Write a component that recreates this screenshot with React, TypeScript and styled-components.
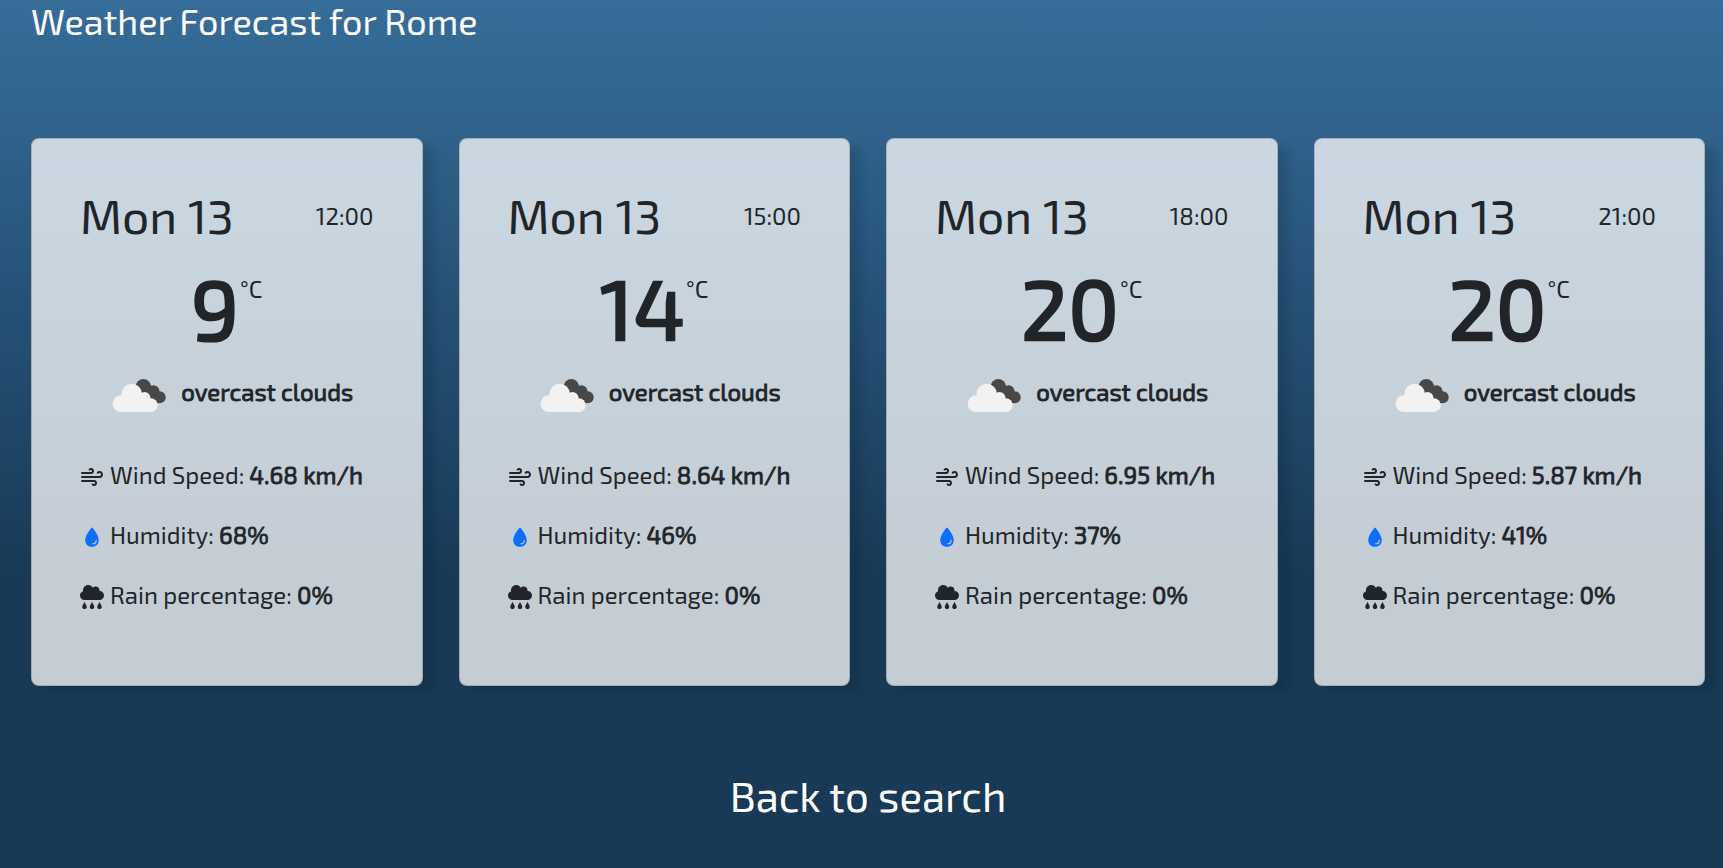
import React from "react";
import styled, { createGlobalStyle } from "styled-components";
import { FaCloudRain } from "react-icons/fa";
import { FiWind } from "react-icons/fi";
import { IoWater } from "react-icons/io5";

const GlobalStyle = createGlobalStyle`
  *, *::before, *::after { box-sizing: border-box; }
  body {
    margin: 0;
    height: 868px;
    overflow: hidden;
    color: #212529;
    font-family: "Exo 2", Roboto, "Liberation Sans", sans-serif;
    font-size: 24px;
    font-weight: 400;
    line-height: 36px;
    background: linear-gradient(180deg, #376d99 0%, #2f618a 138px, #265278 290px, #1f4668 430px, #183a56 570px, #183a56 100%);
  }
  h1, h2, p, ul { margin: 0; padding: 0; }
`;

const Page = styled.main`
  height: 868px;
  padding: 0 18px 0 31px;
  display: flex;
  flex-direction: column;
`;

const Title = styled.h1`
  color: #fff;
  font-size: 36px;
  font-weight: 400;
  line-height: 41px;
  white-space: nowrap;
`;

const Cards = styled.section`
  margin-top: 97px;
  display: grid;
  grid-template-columns: repeat(4, 1fr);
  gap: 36px;
`;

const Card = styled.article`
  height: 548px;
  padding: 45px 48px 0 48px;
  border: 1px solid rgba(0, 0, 0, 0.175);
  border-radius: 8px;
  background-color: rgba(255, 255, 255, 0.75);
  box-shadow: 12px 8px 8px -1px rgba(0, 0, 0, 0.12);
  white-space: nowrap;
`;

const CardHead = styled.header`
  height: 64px;
  display: flex;
  align-items: center;
  justify-content: space-between;
`;

const Day = styled.h2`
  margin-bottom: 2px;
  font-size: 48px;
  font-weight: 400;
  line-height: 62px;
`;

const Hour = styled.span``;

const Temperature = styled.div`
  height: 112px;
  display: flex;
  justify-content: center;
  align-items: flex-start;
`;

const Degrees = styled.strong`
  font-size: 84px;
  font-weight: 400;
  line-height: 118px;
  -webkit-text-stroke: 2.6px currentColor;
`;

const Unit = styled.span`
  margin: 23px 0 0 1px;
`;

const Condition = styled.div`
  height: 60px;
  margin-top: 2px;
  padding-left: 12px;
  display: flex;
  align-items: center;
  justify-content: center;
`;

const Strong = styled.strong`
  font-weight: 400;
  -webkit-text-stroke: 0.85px currentColor;
`;

const CloudArt = styled.svg`
  width: 54px;
  height: 36px;
  margin: 8px 15px 0 0;
`;

const Metrics = styled.ul`
  margin-top: 35px;
  list-style: none;
  display: flex;
  flex-direction: column;
  gap: 24px;
`;

const Metric = styled.li<{ $tint?: string }>`
  display: flex;
  align-items: center;

  svg {
    width: 24px;
    height: 24px;
    margin: 3px 6px 0 0;
    flex: none;
    color: ${(p) => p.$tint ?? "inherit"};
  }
`;

const Label = styled.span`
  margin-right: 5px;
`;

const BackLink = styled.a`
  margin-top: 81px;
  align-self: center;
  color: #fff;
  font-size: 42px;
  font-weight: 400;
  line-height: 56px;
  text-decoration: none;
`;

function OvercastClouds() {
  return (
    <CloudArt viewBox="0 0 54 36" aria-hidden="true">
      <g fill="#484848">
        <circle cx="31.300" cy="8.600" r="7.600" />
        <circle cx="41.500" cy="13.200" r="6" />
        <circle cx="47.700" cy="19.200" r="6" />
        <path d="M27 14 37 5l12 20H40Z" />
      </g>
      <g fill="#f2f2f2">
        <circle cx="19.700" cy="16" r="10.300" />
        <circle cx="9" cy="25.700" r="8.400" />
        <circle cx="32.500" cy="20" r="6" />
        <circle cx="38.800" cy="27.200" r="6.900" />
        <path d="M9 18 20 14l12 2 7 8v10.100H9Z" />
      </g>
    </CloudArt>
  );
}

interface Forecast {
  day: string;
  hour: string;
  degrees: number;
  description: string;
  wind: string;
  humidity: string;
  rain: string;
}

const forecasts: Forecast[] = [
  { day: "Mon 13", hour: "12:00", degrees: 9, description: "overcast clouds", wind: "4.68 km/h", humidity: "68%", rain: "0%" },
  { day: "Mon 13", hour: "15:00", degrees: 14, description: "overcast clouds", wind: "8.64 km/h", humidity: "46%", rain: "0%" },
  { day: "Mon 13", hour: "18:00", degrees: 20, description: "overcast clouds", wind: "6.95 km/h", humidity: "37%", rain: "0%" },
  { day: "Mon 13", hour: "21:00", degrees: 20, description: "overcast clouds", wind: "5.87 km/h", humidity: "41%", rain: "0%" },
];

function ForecastCard({ item }: { item: Forecast }) {
  return (
    <Card>
      <CardHead>
        <Day>{item.day}</Day>
        <Hour>{item.hour}</Hour>
      </CardHead>
      <Temperature>
        <Degrees>{item.degrees}</Degrees>
        <Unit>°C</Unit>
      </Temperature>
      <Condition>
        <OvercastClouds />
        <Strong>{item.description}</Strong>
      </Condition>
      <Metrics>
        <Metric>
          <FiWind />
          <Label>Wind Speed:</Label>
          <Strong>{item.wind}</Strong>
        </Metric>
        <Metric $tint="#0d6efd">
          <IoWater />
          <Label>Humidity:</Label>
          <Strong>{item.humidity}</Strong>
        </Metric>
        <Metric>
          <FaCloudRain />
          <Label>Rain percentage:</Label>
          <Strong>{item.rain}</Strong>
        </Metric>
      </Metrics>
    </Card>
  );
}

export default function App() {
  return (
    <>
      <GlobalStyle />
      <Page>
        <Title>Weather Forecast for Rome</Title>
        <Cards>
          {forecasts.map((item) => (
            <ForecastCard key={item.hour} item={item} />
          ))}
        </Cards>
        <BackLink>Back to search</BackLink>
      </Page>
    </>
  );
}
